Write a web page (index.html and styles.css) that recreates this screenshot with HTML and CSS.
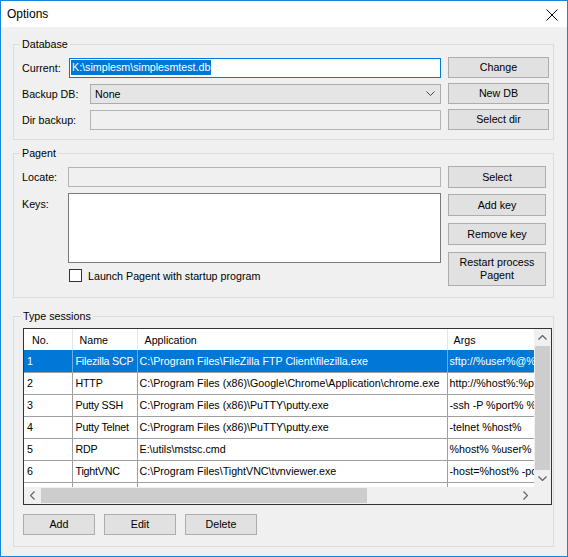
FILE: index.html
```html
<!DOCTYPE html>
<html lang="en">
<head>
    <meta charset="UTF-8">
    <title>Options</title>
    <link rel="stylesheet" href="styles.css">
</head>
<body>
    <div class="window">
        <div class="titlebar">
            <span class="title">Options</span>
            <svg class="close" width="12" height="12" viewBox="0 0 12 12">
                <path d="M0.5 0.5 L11.5 11.5 M11.5 0.5 L0.5 11.5" stroke="#000" stroke-width="1" fill="none"/>
            </svg>
        </div>

        <div class="client">
            <fieldset class="group group-db">
                <legend>Database</legend>
                <div class="row">
                    <label class="lbl lbl-short">Current:</label>
                    <div class="field field-focus"><span class="sel-text">K:\simplesm\simplesmtest.db</span></div>
                    <button class="btn btn-db">Change</button>
                </div>
                <div class="row">
                    <label class="lbl lbl-long">Backup DB:</label>
                    <div class="combo">
                        <span>None</span>
                        <svg width="9" height="5" viewBox="0 0 9 5"><path d="M0.5 0.5 L4.5 4.5 L8.5 0.5" stroke="#444" fill="none"/></svg>
                    </div>
                    <button class="btn btn-db">New DB</button>
                </div>
                <div class="row">
                    <label class="lbl lbl-long">Dir backup:</label>
                    <div class="field field-ro"></div>
                    <button class="btn btn-db">Select dir</button>
                </div>
            </fieldset>

            <fieldset class="group group-pagent">
                <legend>Pagent</legend>
                <div class="pagent-grid">
                    <label class="lbl">Locate:</label>
                    <div class="field field-ro"></div>
                    <button class="btn">Select</button>

                    <label class="lbl lbl-top">Keys:</label>
                    <div class="keys-col">
                        <div class="keys-box"></div>
                        <label class="check"><span class="check-box"></span>Launch Pagent with startup program</label>
                    </div>
                    <div class="btn-col">
                        <button class="btn">Add key</button>
                        <button class="btn">Remove key</button>
                        <button class="btn btn-tall">Restart process<br>Pagent</button>
                    </div>
                </div>
            </fieldset>

            <fieldset class="group group-sessions">
                <legend>Type sessions</legend>
                <div class="listview">
                    <div class="lv-body">
                        <table class="lv-table">
                            <colgroup>
                                <col class="c-no"><col class="c-name"><col class="c-app"><col class="c-args">
                            </colgroup>
                            <thead>
                                <tr><th class="h-no">No.</th><th>Name</th><th>Application</th><th class="h-args">Args</th></tr>
                            </thead>
                            <tbody>
                                <tr class="selected"><td>1</td><td>Filezilla SCP</td><td>C:\Program Files\FileZilla FTP Client\filezilla.exe</td><td>sftp://%user%@%host%:%port%</td></tr>
                                <tr><td>2</td><td>HTTP</td><td>C:\Program Files (x86)\Google\Chrome\Application\chrome.exe</td><td>http://%host%:%port%</td></tr>
                                <tr><td>3</td><td>Putty SSH</td><td>C:\Program Files (x86)\PuTTY\putty.exe</td><td>-ssh -P %port% %user%@%host%</td></tr>
                                <tr><td>4</td><td>Putty Telnet</td><td>C:\Program Files (x86)\PuTTY\putty.exe</td><td>-telnet %host%</td></tr>
                                <tr><td>5</td><td>RDP</td><td>E:\utils\mstsc.cmd</td><td>%host% %user% %password%</td></tr>
                                <tr><td>6</td><td>TightVNC</td><td>C:\Program Files\TightVNC\tvnviewer.exe</td><td>-host=%host% -port=%port%</td></tr>
                                <tr><td></td><td></td><td></td><td></td></tr>
                            </tbody>
                        </table>
                    </div>
                    <div class="vscroll">
                        <div class="arrow"><svg width="9" height="5" viewBox="0 0 9 5"><path d="M0.5 4.5 L4.5 0.5 L8.5 4.5" stroke="#606060" stroke-width="1.2" fill="none"/></svg></div>
                        <div class="vthumb"></div>
                        <div class="arrow"><svg width="9" height="5" viewBox="0 0 9 5"><path d="M0.5 0.5 L4.5 4.5 L8.5 0.5" stroke="#606060" stroke-width="1.2" fill="none"/></svg></div>
                    </div>
                    <div class="hscroll">
                        <div class="arrow"><svg width="5" height="9" viewBox="0 0 5 9"><path d="M4.5 0.5 L0.5 4.5 L4.5 8.5" stroke="#606060" stroke-width="1.2" fill="none"/></svg></div>
                        <div class="htrack"><div class="hthumb"></div></div>
                        <div class="arrow"><svg width="5" height="9" viewBox="0 0 5 9"><path d="M0.5 0.5 L4.5 4.5 L0.5 8.5" stroke="#606060" stroke-width="1.2" fill="none"/></svg></div>
                    </div>
                    <div class="corner"></div>
                </div>
                <div class="actions">
                    <button class="btn btn-small">Add</button>
                    <button class="btn btn-small">Edit</button>
                    <button class="btn btn-small">Delete</button>
                </div>
            </fieldset>
        </div>
    </div>
</body>
</html>
```

FILE: styles.css
```css
* {
    box-sizing: border-box;
}

body {
    margin: 0;
    background: #ffffff;
    font-family: 'Liberation Sans', Arial, sans-serif;
    font-size: 10.7px;
    color: #000;
}

.window {
    width: 568px;
    height: 557px;
    border: 1px solid #1883d7;
    background-color: #f0f0f0;
    display: flex;
    flex-direction: column;
}

.titlebar {
    height: 26px;
    background: #fff;
    display: flex;
    align-items: center;
    justify-content: space-between;
    padding: 0 9px 0 6px;
    font-size: 12px;
}

.title {
    margin-top: -1px;
}

.close {
    margin-top: 1px;
}

.client {
    padding: 11px 13px 0 12px;
    display: flex;
    flex-direction: column;
}

.group {
    margin: 0;
    min-width: 0;
    border: 1px solid #dcdcdc;
    padding: 6px 4px 9px 8px;
}

.group legend {
    padding: 0 2px;
    margin-left: -2px;
    line-height: 13px;
}

/* database */
.group-db {
    display: flex;
    flex-direction: column;
    gap: 5px;
}

.row {
    display: flex;
    align-items: center;
    height: 21px;
}

.lbl {
    flex: none;
}

.lbl-short {
    width: 47px;
}

.lbl-long {
    width: 68px;
}

.field {
    flex: 1;
    height: 20px;
    border: 1px solid #7a7a7a;
    background: #fff;
    display: flex;
    align-items: center;
    padding-left: 1px;
}

.field-focus {
    border-color: #0078d7;
}

.field-ro {
    background: #f0f0f0;
    border-color: #b4b4b4;
}

.sel-text {
    background: #0078d7;
    color: #fff;
    padding: 1px 1px;
    line-height: 13px;
}

.combo {
    flex: 1;
    height: 20px;
    border: 1px solid #acacac;
    background: #e5e5e5;
    display: flex;
    align-items: center;
    justify-content: space-between;
    padding: 0 5px 0 4px;
}

.btn {
    font-family: inherit;
    font-size: 10.7px;
    color: #000;
    background: #e1e1e1;
    border: 1px solid #adadad;
    border-radius: 0;
    height: 22px;
    width: 98px;
    padding: 0;
    line-height: 13px;
}

.btn-db {
    width: 101px;
    height: 21px;
    margin-left: 7px;
}

/* pagent */
.group-pagent {
    margin-top: 7px;
    padding: 6px 7px 11px 8px;
}

.pagent-grid {
    display: grid;
    grid-template-columns: 39px 1fr 98px;
    grid-template-rows: 22px auto;
    column-gap: 7px;
    row-gap: 5px;
    align-items: center;
}

.lbl-top {
    align-self: start;
    padding-top: 5px;
}

.pagent-grid .field {
    height: 20px;
}

.keys-col {
    align-self: start;
    display: flex;
    flex-direction: column;
}

.keys-box {
    height: 70px;
    background: #fff;
    border: 1px solid #7a7a7a;
}

.check {
    display: flex;
    align-items: center;
    margin-top: 6px;
    margin-left: 1px;
    height: 13px;
}

.check-box {
    width: 13px;
    height: 13px;
    border: 1px solid #333;
    background: #fff;
    margin-right: 6px;
}

.btn-col {
    align-self: start;
    margin-top: 1px;
    display: flex;
    flex-direction: column;
    gap: 7px;
}

.btn-tall {
    height: 34px;
}

/* sessions */
.group-sessions {
    margin-top: 12px;
    padding: 5px 1px 11px 9px;
}

.listview {
    height: 177px;
    border: 1px solid #333;
    background: #fff;
    display: grid;
    grid-template-columns: 1fr 17px;
    grid-template-rows: 1fr 17px;
    overflow: hidden;
}

.lv-body {
    overflow: hidden;
}

.lv-table {
    table-layout: fixed;
    border-collapse: collapse;
    width: 563px;
}

.c-no { width: 48px; }
.c-name { width: 65px; }
.c-app { width: 310px; }
.c-args { width: 140px; }

.lv-table th {
    height: 21px;
    font-weight: normal;
    text-align: left;
    padding: 0 0 0 7px;
    border-right: 1px solid #e5e5e5;
    white-space: nowrap;
    overflow: hidden;
}

.lv-table th.h-no {
    padding-left: 8px;
}

.lv-table th.h-args {
    padding-left: 6px;
}

.lv-table td {
    height: 22px;
    padding: 0 0 0 3px;
    border-right: 1px solid #a0a0a0;
    border-bottom: 1px solid #a0a0a0;
    white-space: nowrap;
    overflow: hidden;
}

.lv-table td:nth-child(2) {
    letter-spacing: -0.2px;
}

.lv-table td:nth-child(3),
.lv-table td:nth-child(4) {
    padding-left: 2px;
}

.lv-table tr.selected td {
    background: #0078d7;
    color: #fff;
    border-right-color: #6aaee8;
}

.vscroll {
    background: #f0f0f0;
    display: flex;
    flex-direction: column;
}

.arrow {
    flex: none;
    width: 17px;
    height: 17px;
    display: flex;
    align-items: center;
    justify-content: center;
}

.vthumb {
    flex: 1;
    background: #cdcdcd;
    margin: 0 1px;
}

.hscroll {
    background: #f0f0f0;
    display: flex;
}

.htrack {
    flex: 1;
    display: flex;
    align-items: stretch;
    padding: 1px 0;
}

.hthumb {
    width: 326px;
    background: #cdcdcd;
}

.corner {
    background: #f0f0f0;
}

.actions {
    display: flex;
    gap: 9px;
    margin-top: 9px;
}

.btn-small {
    width: 72px;
    height: 21px;
}
```
